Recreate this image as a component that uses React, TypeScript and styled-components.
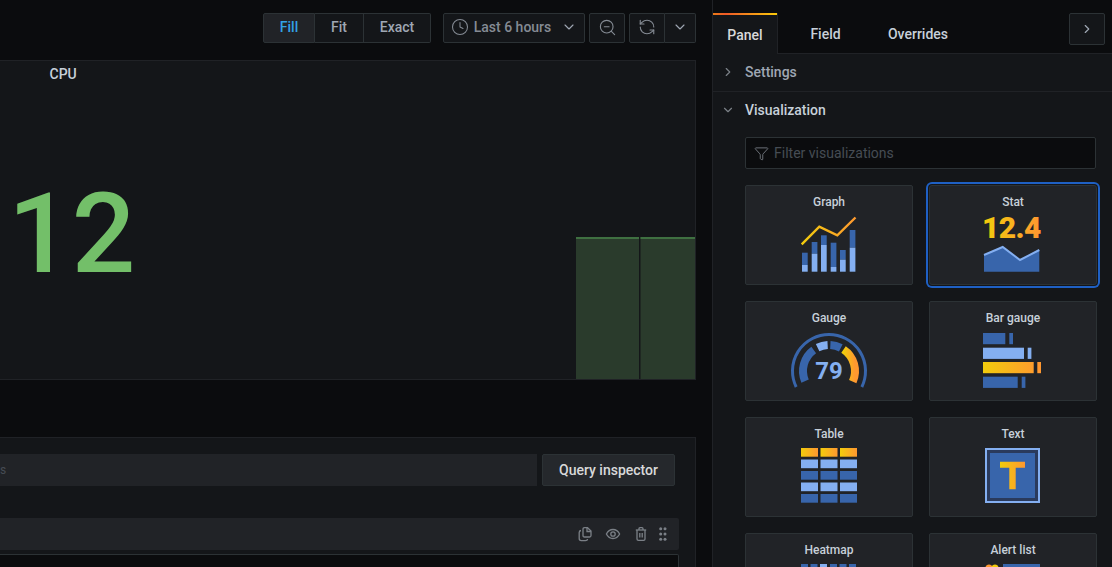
import styled, { createGlobalStyle } from "styled-components";
import {
  ChevronDown,
  ChevronRight,
  Clock,
  Filter,
  RefreshCcw,
  ZoomOut,
} from "lucide-react";
import type { ReactNode } from "react";

const BLUE = "#3865ab";
const LIGHT = "#84aff1";
const YELLOW = "#f2cc0c";
const ORANGE = "#ff9830";

const GlobalStyle = createGlobalStyle`
  html, body {
    margin: 0;
    padding: 0;
    background: #0b0c0e;
    font-family: Roboto, "Liberation Sans", sans-serif;
    overflow: hidden;
  }
  * { box-sizing: border-box; }
`;

const Page = styled.div`
  display: flex;
  width: 1112px;
  height: 567px;
  overflow: hidden;
  background: #0b0c0e;
`;

const Main = styled.div`
  width: 696px;
  display: flex;
  flex-direction: column;
  padding-top: 13px;
  flex-shrink: 0;
`;

const Toolbar = styled.div`
  display: flex;
  justify-content: flex-end;
  height: 30px;
  margin-bottom: 17px;
  flex-shrink: 0;
`;

const BtnGroup = styled.div<{ $gap: number }>`
  display: flex;
  margin-right: ${({ $gap }) => $gap}px;
`;

const ToolBtn = styled.div<{ $w: number; $active?: boolean; $joined?: boolean; $dim?: boolean }>`
  width: ${({ $w }) => $w}px;
  height: 30px;
  display: flex;
  align-items: center;
  justify-content: center;
  gap: 5px;
  padding-bottom: 2px;
  background: ${({ $active }) => ($active ? "#212327" : "#141619")};
  border: 1px solid #2c3235;
  border-left-width: ${({ $joined }) => ($joined ? 0 : 1)}px;
  color: ${({ $active, $dim }) => ($active ? "#33a2e5" : $dim ? "#858b94" : "#9fa7b3")};
  font-size: 14px;
  font-weight: 500;
  white-space: nowrap;
  &:first-child { border-radius: 2px 0 0 2px; }
  &:last-child { border-radius: 0 2px 2px 0; }
  &:only-child { border-radius: 2px; }
`;

const PickerArrow = styled.span`
  display: flex;
  margin-left: 5px;
  color: #9fa7b3;
`;

const Panel = styled.div`
  position: relative;
  height: 320px;
  flex-shrink: 0;
  background: #141619;
  border: 1px solid #202226;
  border-left: 0;
  overflow: hidden;
`;

const PanelTitle = styled.div`
  height: 25px;
  padding-left: 49.5px;
  display: flex;
  align-items: center;
  font-size: 14px;
  font-weight: 500;
  color: #c7d0d9;
`;

const BigValue = styled.div`
  margin-top: 92px;
  padding-left: 8px;
  font-size: 112px;
  font-weight: 500;
  line-height: 1;
  color: #73bf69;
`;

const Sparkline = styled.svg`
  position: absolute;
  right: 0;
  bottom: 0;
`;

const QuerySection = styled.div`
  margin-top: 57px;
  flex: 1;
  min-height: 0;
  overflow: hidden;
  background: #141619;
  border-top: 1px solid #202226;
  border-right: 1px solid #202226;
  padding-top: 16px;
`;

const QueryBar = styled.div`
  display: flex;
  gap: 5px;
  height: 32px;
  padding-right: 20px;
`;

const OptionsField = styled.div`
  flex: 1;
  background: #212327;
  font-size: 12px;
  color: #464c54;
  display: flex;
  align-items: center;
`;

const InspectorBtn = styled.div`
  width: 133px;
  display: flex;
  align-items: center;
  justify-content: center;
  background: #25282c;
  border: 1px solid #2c3235;
  border-radius: 2px;
  font-size: 14px;
  font-weight: 500;
  color: #d8d9da;
`;

const QueryRow = styled.div`
  margin: 32px 16px 0 0;
  height: 32px;
  background: #212327;
  border-radius: 0 2px 2px 0;
  display: flex;
  align-items: center;
  justify-content: flex-end;
  padding-right: 12px;
  color: #7b8087;
  gap: 12px;
`;

const DragHandle = styled.svg`
  margin-left: -2px;
`;

const Editor = styled.div`
  margin: 4px 16px 0 0;
  height: 40px;
  background: #0b0c0e;
  border: 1px solid #2c3235;
  border-left: 0;
  border-radius: 0 2px 0 0;
`;

const Side = styled.div`
  flex: 1;
  display: flex;
  flex-direction: column;
  padding-top: 13px;
  margin-left: 16px;
  border-left: 1px solid #202226;
`;

const TabBar = styled.div`
  display: flex;
  height: 41px;
  flex-shrink: 0;
  position: relative;
  border-bottom: 1px solid #202226;
`;

const Tab = styled.div<{ $active?: boolean; $w: number }>`
  width: ${({ $w }) => $w}px;
  height: ${({ $active }) => ($active ? 41 : 40)}px;
  display: flex;
  align-items: center;
  justify-content: center;
  padding-top: 2px;
  font-size: 14px;
  font-weight: 500;
  color: ${({ $active }) => ($active ? "#d8d9da" : "#c7d0d9")};
  background: ${({ $active }) => ($active ? "#141619" : "transparent")};
  border-right: ${({ $active }) => ($active ? "1px solid #202226" : "0")};
  position: relative;
  ${({ $active }) =>
    $active
      ? `&::before {
          content: "";
          position: absolute;
          top: 0;
          left: 0;
          right: 0;
          height: 2px;
          background: linear-gradient(90deg, #eb7b18, #f05a28 20%, #fbca0a);
        }`
      : ""}
`;

const CollapseBtn = styled.div`
  margin-left: auto;
  margin-right: 8px;
  width: 36px;
  height: 32px;
  display: flex;
  align-items: center;
  justify-content: center;
  background: #141619;
  border: 1px solid #2c3235;
  border-radius: 2px;
  color: #9fa7b3;
`;

const SideBody = styled.div`
  flex: 1;
  min-height: 0;
  background: #141619;
  overflow: hidden;
`;

const SectionHead = styled.div<{ $open?: boolean }>`
  height: ${({ $open }) => ($open ? 37 : 38)}px;
  display: flex;
  align-items: center;
  gap: 10px;
  padding-left: 8px;
  padding-bottom: 2px;
  font-size: 14px;
  font-weight: 500;
  color: ${({ $open }) => ($open ? "#c7d0d9" : "#9fa7b3")};
  border-bottom: ${({ $open }) => ($open ? "0" : "1px solid #202226")};
  svg { color: #7b8087; }
`;

const SectionBody = styled.div`
  padding: 8px 16px 0 32px;
`;

const FilterBox = styled.div`
  height: 32px;
  width: 351px;
  display: flex;
  align-items: center;
  gap: 5px;
  padding-left: 8px;
  background: #0b0c0e;
  border: 1px solid #2c3235;
  border-radius: 2px;
  font-size: 14px;
  color: #464c54;
  svg { color: #6c7178; }
`;

const VizGrid = styled.div`
  margin-top: 16px;
  display: grid;
  grid-template-columns: 168px 168px;
  grid-auto-rows: 100px;
  gap: 16px;
`;

const VizCard = styled.div<{ $selected?: boolean }>`
  background: #212327;
  border: 1px solid #2c3235;
  border-radius: 2px;
  display: flex;
  flex-direction: column;
  align-items: center;
  padding-top: 9px;
  ${({ $selected }) =>
    $selected ? "box-shadow: 0 0 0 1px #141619, 0 0 0 3px #1f60c4; border-radius: 3px;" : ""}
`;

const VizName = styled.div`
  font-size: 12px;
  font-weight: 500;
  line-height: 14px;
  color: #c7d0d9;
  margin-bottom: 7px;
`;

const IconSvg = styled.svg`
  overflow: visible;
`;

const Defs = () => (
  <defs>
    <linearGradient id="warm" x1="0" x2="1" y1="0" y2="0">
      <stop offset="0" stopColor={YELLOW} />
      <stop offset="1" stopColor={ORANGE} />
    </linearGradient>
    <linearGradient id="warmUser" gradientUnits="userSpaceOnUse" x1="0" x2="56" y1="0" y2="0">
      <stop offset="0" stopColor={YELLOW} />
      <stop offset="1" stopColor={ORANGE} />
    </linearGradient>
  </defs>
);

const Icon = ({ children, w = 56, h = 56 }: { children: ReactNode; w?: number; h?: number }) => (
  <IconSvg width={w} height={h} viewBox={`0 0 ${w} ${h}`}>
    <Defs />
    {children}
  </IconSvg>
);

const graphBars = [
  { x: 1, top: 36.7, mid: 49 },
  { x: 10.7, top: 26, mid: 37.7 },
  { x: 20, top: 19.3, mid: 29 },
  { x: 29.7, top: 26.7, mid: 51 },
  { x: 39, top: 34, mid: 43.7 },
  { x: 48.7, top: 14, mid: 31.7 },
];

const GraphIcon = () => (
  <Icon>
    {graphBars.map((b) => (
      <g key={b.x}>
        <rect x={b.x} y={b.top} width={5.7} height={b.mid - b.top} fill={BLUE} />
        <rect x={b.x} y={b.mid} width={5.7} height={55.7 - b.mid} fill={LIGHT} />
      </g>
    ))}
    <polyline
      points="0.7,28.3 18.3,10.7 36.3,19.3 54.5,1.5"
      fill="none"
      stroke="url(#warmUser)"
      strokeWidth={2.4}
    />
  </Icon>
);

const StatIcon = () => (
  <Icon>
    <g transform="translate(-1 0)">
      <text x={-2} y={22.3} fontSize={30} fontWeight={900} letterSpacing={-0.6} fontFamily="Roboto" fill="url(#warmUser)">
        12.4
      </text>
      <path d="M0 39 L18.7 31 L36 44 L55.3 34 V55.7 H0 Z" fill={BLUE} />
      <path d="M0 39 L18.7 31 L36 44 L55.3 34" fill="none" stroke={LIGHT} strokeWidth={2} />
    </g>
  </Icon>
);

// arc from top, clockwise, in degrees
const arc = (cx: number, cy: number, r: number, a0: number, a1: number) => {
  const pt = (a: number) => {
    const rad = (a * Math.PI) / 180;
    return `${(cx + r * Math.sin(rad)).toFixed(2)} ${(cy - r * Math.cos(rad)).toFixed(2)}`;
  };
  return `M${pt(a0)} A${r} ${r} 0 ${a1 - a0 > 180 ? 1 : 0} 1 ${pt(a1)}`;
};

const GaugeIcon = () => (
  <Icon w={80} h={56}>
    <path d={arc(40, 39, 36.5, -116, 116)} fill="none" stroke={BLUE} strokeWidth={3} />
    <path d={arc(40, 39, 26, -113, -36)} fill="none" stroke={BLUE} strokeWidth={8} />
    <path d={arc(40, 39, 26, -26, -3)} fill="none" stroke={LIGHT} strokeWidth={8} />
    <path d={arc(40, 39, 26, 3, 27)} fill="none" stroke={BLUE} strokeWidth={8} />
    <path d={arc(40, 39, 26, 34, 114)} fill="none" stroke="url(#warm)" strokeWidth={8} />
    <text x={40} y={47} textAnchor="middle" fontSize={24} fontWeight={700} fontFamily="Roboto" fill={LIGHT}>
      79
    </text>
  </Icon>
);

const gaugeRows = [
  { y: 1, w: 22.3, tip: 26.3, tipFill: BLUE, fill: BLUE },
  { y: 15.7, w: 41, tip: 44.7, tipFill: LIGHT, fill: LIGHT },
  { y: 30, w: 50.7, tip: 54.3, tipFill: ORANGE, fill: "url(#warmUser)" },
  { y: 44.7, w: 34.7, tip: 38.7, tipFill: BLUE, fill: BLUE },
];

const BarGaugeIcon = () => (
  <Icon w={60}>
    {gaugeRows.map((r) => (
      <g key={r.y}>
        <rect x={0} y={r.y} width={r.w} height={11.2} fill={r.fill} />
        <rect x={r.tip} y={r.y} width={3.7} height={11.2} fill={r.tipFill} />
      </g>
    ))}
  </Icon>
);

const tableRows = ["url(#warm)", LIGHT, BLUE, LIGHT, BLUE];

const TableIcon = () => (
  <Icon>
    {tableRows.map((fill, row) =>
      [0, 19.5, 39].map((x) => (
        <rect key={`${row}-${x}`} x={x} y={row * 11.5} width={17} height={8.7} fill={fill} />
      )),
    )}
  </Icon>
);

const TextIcon = () => (
  <Icon>
    <rect x={1} y={1} width={53} height={53} fill="#2a3a5c" stroke={LIGHT} strokeWidth={2} />
    <rect x={5} y={5} width={45} height={45} fill={BLUE} />
    <path d="M15 13.7 H40 V19.7 H30.7 V41.3 H24.3 V19.7 H15 Z" fill="url(#warm)" />
  </Icon>
);

const heatCols = [0, 9.5, 19, 29, 38.5, 48];

const HeatmapIcon = () => (
  <Icon>
    {heatCols.map((x, i) => (
      <rect key={x} x={x} y={0} width={7} height={9} fill={i === 2 ? LIGHT : BLUE} />
    ))}
  </Icon>
);

const AlertIcon = () => (
  <Icon>
    <circle cx={4} cy={4} r={3.5} fill={ORANGE} />
    <circle cx={10} cy={4} r={3.5} fill={YELLOW} />
    <rect x={18} y={0} width={37} height={9} fill={BLUE} />
  </Icon>
);

const CopyIcon = () => (
  <svg width="16" height="16" viewBox="0 0 16 16" fill="none" stroke="currentColor" strokeWidth="1.3">
    <path d="M7.5 1.7 H10.5 L14 5 V9.5 Q14 11 12.5 11 H7.5 Q6 11 6 9.5 V3.2 Q6 1.7 7.5 1.7 Z" />
    <path d="M10 1.7 V5.5 H14" />
    <path d="M4 4.5 Q2.2 4.8 2.2 6.5 V12.5 Q2.2 14.6 4.2 14.6 H8.5 Q10.4 14.6 10.6 13" />
  </svg>
);

const EyeIcon = () => (
  <svg width="16" height="16" viewBox="0 0 16 16" fill="none" stroke="currentColor" strokeWidth="1.3">
    <path d="M1.4 8 C3 4.8 5.4 3.5 8 3.5 C10.6 3.5 13 4.8 14.6 8 C13 11.2 10.6 12.5 8 12.5 C5.4 12.5 3 11.2 1.4 8 Z" />
    <circle cx="8" cy="8" r="2.2" />
  </svg>
);

const TrashIcon = () => (
  <svg width="16" height="16" viewBox="0 0 16 16" fill="none" stroke="currentColor" strokeWidth="1.3">
    <path d="M2.8 4 H13.2" />
    <path d="M6 4 V2.8 Q6 1.7 7 1.7 H9 Q10 1.7 10 2.8 V4" />
    <path d="M4 4 V13 Q4 14.4 5.4 14.4 H10.6 Q12 14.4 12 13 V4" />
    <path d="M6.8 7 V11.5 M9.2 7 V11.5" />
  </svg>
);

const vizTypes = [
  { name: "Graph", icon: <GraphIcon /> },
  { name: "Stat", icon: <StatIcon />, selected: true },
  { name: "Gauge", icon: <GaugeIcon /> },
  { name: "Bar gauge", icon: <BarGaugeIcon /> },
  { name: "Table", icon: <TableIcon /> },
  { name: "Text", icon: <TextIcon /> },
  { name: "Heatmap", icon: <HeatmapIcon /> },
  { name: "Alert list", icon: <AlertIcon /> },
];

const App = () => {
  return (
    <Page>
      <GlobalStyle />
      <Main>
        <Toolbar>
          <BtnGroup $gap={12}>
            <ToolBtn $w={52} $active>Fill</ToolBtn>
            <ToolBtn $w={49} $joined>Fit</ToolBtn>
            <ToolBtn $w={67} $joined>Exact</ToolBtn>
          </BtnGroup>
          <BtnGroup $gap={4}>
            <ToolBtn $w={142} $dim>
              <Clock size={18} strokeWidth={1.4} />
              Last 6 hours
              <PickerArrow><ChevronDown size={16} strokeWidth={1.7} /></PickerArrow>
            </ToolBtn>
          </BtnGroup>
          <BtnGroup $gap={4}>
            <ToolBtn $w={36} $dim><ZoomOut size={19} strokeWidth={1.4} /></ToolBtn>
          </BtnGroup>
          <BtnGroup $gap={0}>
            <ToolBtn $w={36} $dim><RefreshCcw size={18} strokeWidth={1.5} /></ToolBtn>
            <ToolBtn $w={31} $joined><ChevronDown size={16} strokeWidth={1.7} /></ToolBtn>
          </BtnGroup>
        </Toolbar>

        <Panel>
          <PanelTitle>CPU</PanelTitle>
          <BigValue>12</BigValue>
          <Sparkline width="119" height="142" viewBox="0 0 119 142">
            <rect x={0} y={0} width={63} height={142} fill="#2a3b2c" />
            <rect x={64.5} y={0} width={54.5} height={142} fill="#2a3b2c" />
            <rect x={0} y={0} width={63} height={2} fill="#3f7041" />
            <rect x={64.5} y={0} width={54.5} height={2} fill="#3f7041" />
          </Sparkline>
        </Panel>

        <QuerySection>
          <QueryBar>
            <OptionsField>s</OptionsField>
            <InspectorBtn>Query inspector</InspectorBtn>
          </QueryBar>
          <QueryRow>
            <CopyIcon />
            <EyeIcon />
            <TrashIcon />
            <DragHandle width="8" height="16" viewBox="0 0 8 16" fill="currentColor">
              <circle cx="1.7" cy="2.7" r="1.5" />
              <circle cx="6" cy="2.7" r="1.5" />
              <circle cx="1.7" cy="8" r="1.5" />
              <circle cx="6" cy="8" r="1.5" />
              <circle cx="1.7" cy="13.3" r="1.5" />
              <circle cx="6" cy="13.3" r="1.5" />
            </DragHandle>
          </QueryRow>
          <Editor />
        </QuerySection>
      </Main>

      <Side>
        <TabBar>
          <Tab $active $w={65}>Panel</Tab>
          <Tab $w={95}>Field</Tab>
          <Tab $w={90}>Overrides</Tab>
          <CollapseBtn><ChevronRight size={14} /></CollapseBtn>
        </TabBar>
        <SideBody>
          <SectionHead>
            <ChevronRight size={14} />
            Settings
          </SectionHead>
          <SectionHead $open>
            <ChevronDown size={14} />
            Visualization
          </SectionHead>
          <SectionBody>
            <FilterBox>
              <Filter size={15} strokeWidth={1.6} />
              Filter visualizations
            </FilterBox>
            <VizGrid>
              {vizTypes.map((v) => (
                <VizCard key={v.name} $selected={v.selected}>
                  <VizName>{v.name}</VizName>
                  {v.icon}
                </VizCard>
              ))}
            </VizGrid>
          </SectionBody>
        </SideBody>
      </Side>
    </Page>
  );
};

export default App;
